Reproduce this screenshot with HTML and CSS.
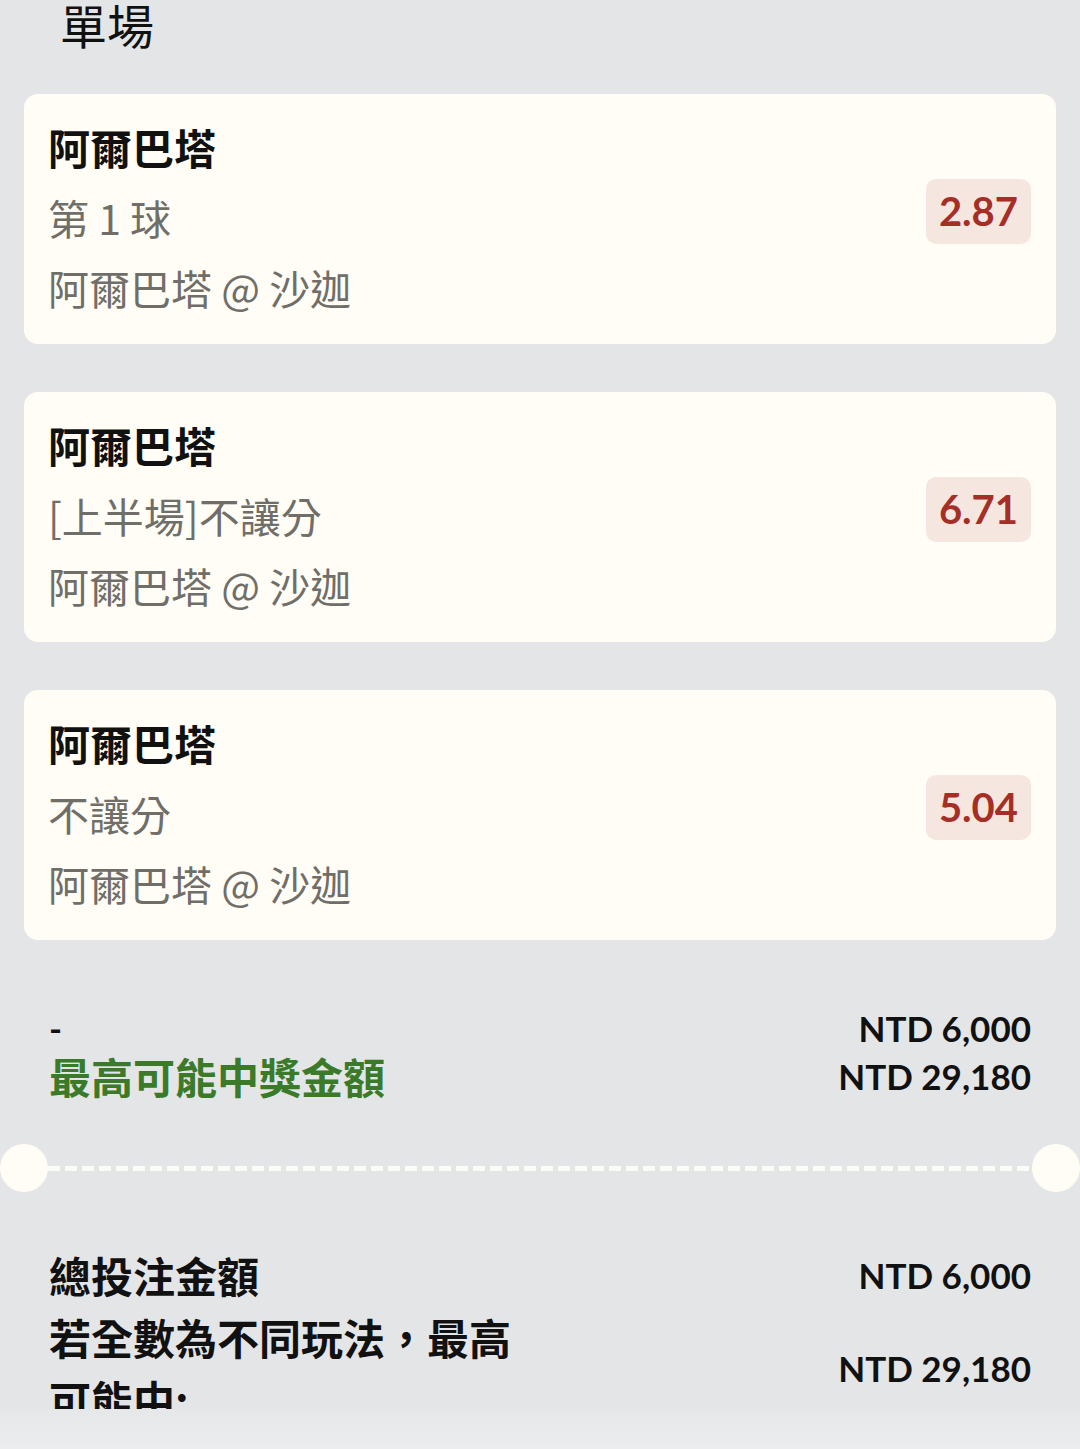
FILE: index.html
```html
<!DOCTYPE html>
<html lang="zh-Hant">
<head>
<meta charset="utf-8">
<title>單場</title>
<link rel="stylesheet" href="styles.css">
</head>
<body>
<div class="viewport">
  <div class="page">
    <div class="header">單場</div>

    <div class="cards">
      <div class="card">
        <div class="card-text">
          <div class="title">阿爾巴塔</div>
          <div class="sub">第 1 球</div>
          <div class="sub">阿爾巴塔 @ 沙迦</div>
        </div>
        <div class="odds">2.87</div>
      </div>
      <div class="card">
        <div class="card-text">
          <div class="title">阿爾巴塔</div>
          <div class="sub">[上半場]不讓分</div>
          <div class="sub">阿爾巴塔 @ 沙迦</div>
        </div>
        <div class="odds">6.71</div>
      </div>
      <div class="card">
        <div class="card-text">
          <div class="title">阿爾巴塔</div>
          <div class="sub">不讓分</div>
          <div class="sub">阿爾巴塔 @ 沙迦</div>
        </div>
        <div class="odds">5.04</div>
      </div>
    </div>

    <div class="summary">
      <div class="dash">-</div>
      <div class="amount">NTD 6,000</div>
      <div class="green">最高可能中獎金額</div>
      <div class="amount">NTD 29,180</div>
    </div>

    <div class="separator">
      <span class="notch"></span>
      <span class="dashes"></span>
      <span class="notch"></span>
    </div>

    <div class="totals">
      <div class="label">總投注金額</div>
      <div class="amount">NTD 6,000</div>
      <div class="label wrap">若全數為不同玩法，最高可能中:</div>
      <div class="amount center">NTD 29,180</div>
    </div>
  </div>
</div>
<div class="bottom-band"></div>
</body>
</html>
```

FILE: styles.css
```css
html, body {
  margin: 0;
  padding: 0;
}

body {
  background: #e4e5e7;
  font-family: "Noto Sans CJK TC", "Noto Sans", sans-serif;
  color: #111;
  width: 1080px;
  height: 1449px;
  overflow: hidden;
}

.viewport {
  height: 1409px;
  overflow: hidden;
}

.header {
  font-size: 47px;
  line-height: 48px;
  height: 48px;
  padding-left: 60px;
  font-weight: 400;
  color: #111;
}

.cards {
  margin-top: 46px;
  padding: 0 24px;
  display: flex;
  flex-direction: column;
  gap: 48px;
}

.card {
  background: #fffdf5;
  border-radius: 14px;
  padding: 18px 25px 22px 24px;
  display: flex;
  justify-content: space-between;
  align-items: center;
}

.card-text {
  font-size: 42px;
  line-height: 70px;
}

.title {
  font-weight: 700;
  color: #111;
}

.sub {
  color: #6f6e69;
  font-size: 41px;
}

.odds {
  margin-bottom: 12px;
  background: #f6e6e0;
  color: #a52e27;
  border-radius: 10px;
  height: 65px;
  line-height: 65px;
  padding: 0 13px;
  font-family: Lato, "Noto Sans", sans-serif;
  font-size: 40px;
  font-weight: 700;
}

.summary {
  margin-top: 64px;
  padding: 0 49px 0 49px;
  display: grid;
  grid-template-columns: 1fr auto;
  line-height: 48px;
}

.dash {
  font-family: Lato, sans-serif;
  font-weight: 700;
  font-size: 35px;
}

.amount {
  font-family: Lato, sans-serif;
  font-weight: 700;
  font-size: 35px;
  text-align: right;
  color: #111;
}

.green {
  font-size: 42px;
  font-weight: 700;
  color: #3a7a28;
}

.separator {
  margin-top: 44px;
  display: flex;
  align-items: center;
  height: 48px;
}

.notch {
  width: 48px;
  height: 48px;
  border-radius: 50%;
  background: #fffdf5;
  flex: none;
}

.dashes {
  flex: 1;
  height: 5px;
  background: repeating-linear-gradient(90deg, #fbfbf7 0 12px, transparent 12px 17px);
}

.totals {
  margin-top: 52px;
  padding: 0 49px;
  display: grid;
  grid-template-columns: 480px 1fr;
  line-height: 62px;
}

.label {
  font-size: 42px;
  font-weight: 700;
  color: #111;
}

.totals .amount {
  line-height: 62px;
}

.center {
  align-self: center;
}

.bottom-band {
  height: 40px;
  background: linear-gradient(180deg, #e6e7e8 0%, #ecedee 100%);
}
```
